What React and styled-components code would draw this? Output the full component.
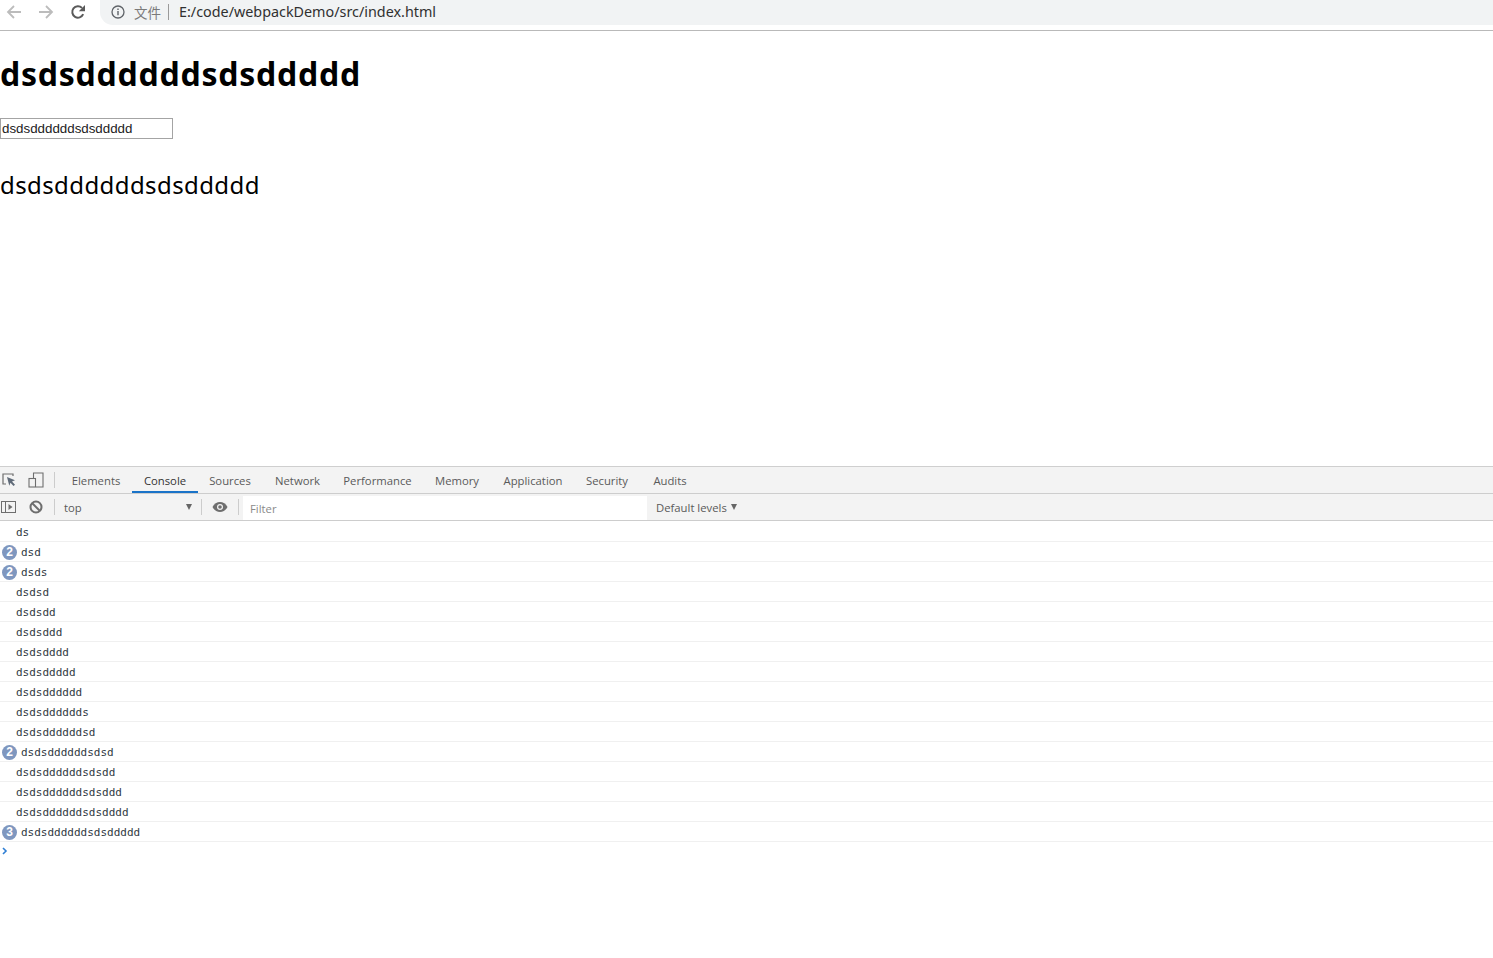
import styled, { createGlobalStyle } from "styled-components";

const GlobalStyle = createGlobalStyle`
  html, body {
    margin: 0;
    padding: 0;
    background: #fff;
  }
`;

const Page = styled.div`
  display: flex;
  flex-direction: column;
  height: 958px;
  overflow: hidden;
`;

const BrowserBar = styled.div`
  display: flex;
  align-items: flex-start;
  gap: 4px;
  flex: none;
  height: 30px;
  background: #fff;
  border-bottom: 1px solid #b9b9b9;
`;

const NavButton = styled.span`
  display: flex;
  align-items: center;
  justify-content: center;
  width: 28px;
  height: 24px;
  color: ${(p) => (p.$active ? "#5a5a5a" : "#bcbcbc")};
`;

const AddressPill = styled.div`
  display: flex;
  align-items: center;
  flex: 1;
  box-sizing: border-box;
  height: 25px;
  margin-left: 4px;
  padding: 0 0 2px 11px;
  background: #f1f3f4;
  border-radius: 0 0 0 13px;
  font-family: "Noto Sans", sans-serif;
  font-size: 14.35px;
`;

const SiteInfo = styled.span`
  display: flex;
  color: #5f6368;
  margin-right: 9px;
`;

const Scheme = styled.span`
  font-family: "Noto Sans CJK SC", sans-serif;
  font-size: 13.5px;
  color: #7a7a7a;
  padding-right: 7px;
  margin-right: 10px;
  line-height: 16px;
  border-right: 1px solid #9a9a9a;
`;

const Url = styled.span`
  color: #303030;
`;

const Content = styled.main`
  flex: none;
  height: 435px;
  color: #000;
  font-family: "Noto Sans", sans-serif;
`;

const Heading = styled.h1`
  margin: 0;
  padding-top: 20px;
  font-size: 32px;
  line-height: 46px;
  font-weight: 700;
  letter-spacing: 0.75px;
`;

const DemoInput = styled.input`
  display: block;
  box-sizing: border-box;
  width: 173px;
  height: 21px;
  margin: 21px 0 0;
  padding: 0 1px;
  border: 1px solid #a4a4a4;
  border-radius: 0;
  outline: none;
  font-family: "Liberation Sans", sans-serif;
  font-size: 13.33px;
  color: #222;
`;

const Paragraph = styled.p`
  margin: 29px 0 0;
  font-size: 24px;
  line-height: 34px;
  font-weight: 400;
  letter-spacing: 0.4px;
`;

const DevTools = styled.section`
  flex: 1;
  display: flex;
  flex-direction: column;
  border-top: 1px solid #cfcfcf;
  font-family: "Open Sans", sans-serif;
  font-size: 11.3px;
  color: #5a5a5a;
`;

const TabBar = styled.div`
  display: flex;
  align-items: stretch;
  flex: none;
  height: 26px;
  background: #f3f3f3;
  border-bottom: 1px solid #cdcdcd;
`;

const ToolIcon = styled.span`
  display: flex;
  align-items: center;
  justify-content: center;
  flex: none;
  width: ${(p) => p.$w}px;
`;

const Divider = styled.span`
  flex: none;
  align-self: center;
  width: 1px;
  height: 16px;
  margin-right: ${(p) => p.$after || 0}px;
  background: #cccccc;
`;

const Tab = styled.div`
  display: flex;
  align-items: center;
  justify-content: center;
  flex: none;
  box-sizing: border-box;
  width: ${(p) => p.$w}px;
  padding-top: 2px;
  color: ${(p) => (p.$active ? "#333" : "#5a5a5a")};
  border-bottom: 2px solid ${(p) => (p.$active ? "#1a73c8" : "transparent")};
`;

const FilterBar = styled.div`
  display: flex;
  align-items: stretch;
  flex: none;
  height: 26px;
  background: #f3f3f3;
  border-bottom: 1px solid #cdcdcd;
`;

const ContextSelect = styled.div`
  display: flex;
  align-items: center;
  justify-content: space-between;
  flex: none;
  box-sizing: border-box;
  width: 146px;
  padding: 0 9px;
`;

const Caret = styled.span`
  display: inline-block;
  width: 0;
  height: 0;
  border-left: 3.5px solid transparent;
  border-right: 3.5px solid transparent;
  border-top: 6px solid #666;
`;

const FilterField = styled.div`
  display: flex;
  align-items: center;
  flex: none;
  box-sizing: border-box;
  width: 404px;
  margin: 2px 0 0 4px;
  padding-left: 7px;
  background: #fff;
  color: #8a8a8a;
`;

const LevelsButton = styled.div`
  display: flex;
  align-items: center;
  gap: 4px;
  padding-left: 9px;
`;

const Log = styled.div`
  flex: 1;
  padding-top: 1px;
  background: #fff;
`;

const LogRow = styled.div`
  display: flex;
  align-items: center;
  box-sizing: border-box;
  height: 20px;
  padding-top: 1px;
  padding-left: ${(p) => (p.$grouped ? 2 : 16)}px;
  border-bottom: 1px solid #f0f0f0;
  font-family: "DejaVu Sans Mono", monospace;
  font-size: 11px;
  color: #303942;
`;

const RepeatBadge = styled.span`
  display: flex;
  align-items: center;
  justify-content: center;
  flex: none;
  width: 15px;
  height: 15px;
  margin-right: 4px;
  border-radius: 50%;
  background: #7f97bf;
  color: #fff;
  font-family: "Liberation Sans", sans-serif;
  font-size: 12px;
  font-weight: 700;
`;

const Prompt = styled.div`
  display: flex;
  align-items: center;
  height: 17px;
  padding-left: 2px;
  color: #2f7fd4;
`;

const tabs = [
  ["Elements", 72],
  ["Console", 66, true],
  ["Sources", 64],
  ["Network", 71],
  ["Performance", 89],
  ["Memory", 70],
  ["Application", 82],
  ["Security", 66],
  ["Audits", 60],
];

const logs = [
  ["ds"],
  ["dsd", 2],
  ["dsds", 2],
  ["dsdsd"],
  ["dsdsdd"],
  ["dsdsddd"],
  ["dsdsdddd"],
  ["dsdsddddd"],
  ["dsdsdddddd"],
  ["dsdsdddddds"],
  ["dsdsddddddsd"],
  ["dsdsddddddsdsd", 2],
  ["dsdsddddddsdsdd"],
  ["dsdsddddddsdsddd"],
  ["dsdsddddddsdsdddd"],
  ["dsdsddddddsdsddddd", 3],
];

const value = "dsdsddddddsdsddddd";

function BackIcon({ flip }) {
  return (
    <svg width="16" height="16" viewBox="0 0 16 16" fill="none" stroke="currentColor" strokeWidth="1.8"
      style={flip ? { transform: "scaleX(-1)" } : undefined}>
      <path d="M15 8H2M8 2L2 8l6 6" />
    </svg>
  );
}

function ReloadIcon() {
  return (
    <svg width="16" height="16" viewBox="0 0 16 16" fill="none">
      <path d="M13.2 10.2A5.7 5.7 0 1 1 12 3.9" stroke="currentColor" strokeWidth="2" />
      <path d="M15 1v6.2H8.8z" fill="currentColor" />
    </svg>
  );
}

function InfoIcon() {
  return (
    <svg width="14" height="14" viewBox="0 0 14 14" fill="none" stroke="currentColor">
      <circle cx="7" cy="7" r="6" strokeWidth="1.3" />
      <path d="M7 6v4.2M7 3.6v1.4" strokeWidth="1.4" />
    </svg>
  );
}

function InspectIcon() {
  return (
    <svg width="16" height="16" viewBox="0 0 16 16" fill="none">
      <path d="M5 2H2v10h3M2 2h10v2" stroke="#6e6e6e" strokeWidth="1.2" />
      <path d="M6 5l8 3.2-3 1.3 3 3.2-1.5 1.3-3-3.2-1.2 3z" fill="#5f6a78" />
    </svg>
  );
}

function DeviceIcon() {
  return (
    <svg width="16" height="16" viewBox="0 0 16 16" fill="none" stroke="#6e6e6e" strokeWidth="1.1">
      <path d="M5.5 6V1h9.5v14H8" />
      <rect x="1" y="6.5" width="6.5" height="8.5" />
    </svg>
  );
}

function SidebarIcon() {
  return (
    <svg width="16" height="14" viewBox="0 0 16 14" fill="none" stroke="#6e6e6e" strokeWidth="1">
      <rect x="0.5" y="1.5" width="14" height="11" />
      <path d="M4.5 1.5v11" />
      <path d="M7.5 4l4 3-4 3z" fill="#6e6e6e" stroke="none" />
    </svg>
  );
}

function ClearIcon() {
  return (
    <svg width="14" height="14" viewBox="0 0 14 14" fill="none" stroke="#6e6e6e" strokeWidth="2">
      <circle cx="7" cy="7" r="5.5" />
      <path d="M3 3l8 8" />
    </svg>
  );
}

function EyeIcon() {
  return (
    <svg width="16" height="12" viewBox="0 0 16 12">
      <path d="M0.5 6C2.2 2.8 5 1 8 1s5.8 1.8 7.5 5C13.8 9.2 11 11 8 11S2.2 9.2 0.5 6z" fill="#6e6e6e" />
      <circle cx="8" cy="6" r="3" fill="#f3f3f3" />
      <circle cx="8" cy="6" r="1.8" fill="#6e6e6e" />
    </svg>
  );
}

function PromptIcon() {
  return (
    <svg width="6" height="8" viewBox="0 0 6 8" fill="none" stroke="currentColor" strokeWidth="1.6">
      <path d="M1 1l3 3-3 3" />
    </svg>
  );
}

export default function App() {
  return (
    <Page>
      <GlobalStyle />
      <BrowserBar>
        <NavButton><BackIcon /></NavButton>
        <NavButton><BackIcon flip /></NavButton>
        <NavButton $active><ReloadIcon /></NavButton>
        <AddressPill>
          <SiteInfo><InfoIcon /></SiteInfo>
          <Scheme>文件</Scheme>
          <Url>E:/code/webpackDemo/src/index.html</Url>
        </AddressPill>
      </BrowserBar>

      <Content>
        <Heading>{value}</Heading>
        <DemoInput defaultValue={value} />
        <Paragraph>{value}</Paragraph>
      </Content>

      <DevTools>
        <TabBar>
          <ToolIcon $w={17}><InspectIcon /></ToolIcon>
          <ToolIcon $w={37}><DeviceIcon /></ToolIcon>
          <Divider $after={5} />
          {tabs.map(([name, w, active]) => (
            <Tab key={name} $w={w} $active={active}>{name}</Tab>
          ))}
        </TabBar>
        <FilterBar>
          <ToolIcon $w={17}><SidebarIcon /></ToolIcon>
          <ToolIcon $w={37}><ClearIcon /></ToolIcon>
          <Divider />
          <ContextSelect>
            top
            <Caret />
          </ContextSelect>
          <Divider />
          <ToolIcon $w={36}><EyeIcon /></ToolIcon>
          <Divider />
          <FilterField>Filter</FilterField>
          <LevelsButton>Default levels <Caret /></LevelsButton>
        </FilterBar>
        <Log>
          {logs.map(([text, count], i) => (
            <LogRow key={i} $grouped={!!count}>
              {count && <RepeatBadge>{count}</RepeatBadge>}
              {text}
            </LogRow>
          ))}
          <Prompt><PromptIcon /></Prompt>
        </Log>
      </DevTools>
    </Page>
  );
}
